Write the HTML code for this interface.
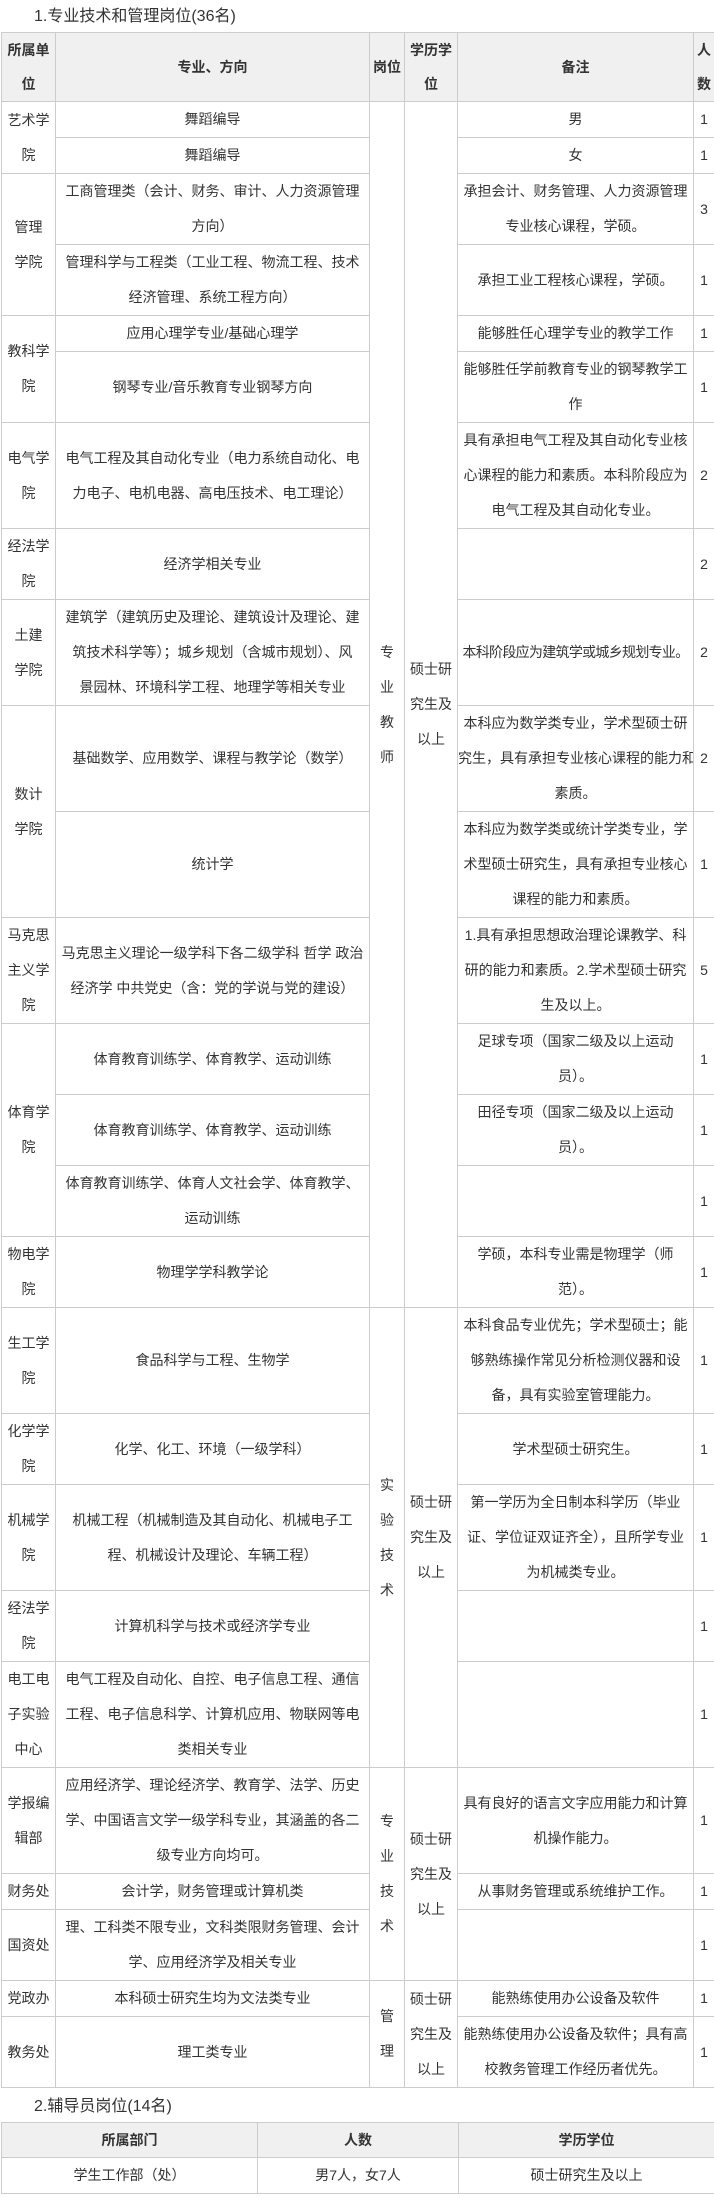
<!DOCTYPE html>
<html><head><meta charset="utf-8">
<style>
body{margin:0;background:#fff;width:714px;height:2198px;overflow:hidden;font-family:"Liberation Sans","Noto Sans CJK SC",sans-serif;color:#333;}
.t{position:absolute;left:34px;font-size:16px;line-height:20px;}
table{position:absolute;left:1px;border-collapse:collapse;table-layout:fixed;font-size:14px;}
td,th{border:1px solid #ccc;padding:0;text-align:center;vertical-align:middle;line-height:35px;white-space:nowrap;overflow:hidden;}
th{background:#f0f0f0;font-weight:bold;line-height:34px;}
.s{letter-spacing:-0.7px}
</style></head><body>
<div class="t" style="top:7px">1.专业技术和管理岗位(36名)</div>
<table style="top:32px;width:713px">
<colgroup><col style="width:54px"><col style="width:314px"><col style="width:35px"><col style="width:53px"><col style="width:236px"><col style="width:21px"></colgroup>
<tr><th>所属单<br>位</th><th>专业、方向</th><th>岗位</th><th>学历学<br>位</th><th>备注</th><th>人<br>数</th></tr>
<tr><td rowspan="2">艺术学<br>院</td><td>舞蹈编导</td><td rowspan="16">专<br>业<br>教<br>师</td><td rowspan="16">硕士研<br>究生及<br>以上</td><td>男</td><td>1</td></tr>
<tr><td>舞蹈编导</td><td>女</td><td>1</td></tr>
<tr><td rowspan="2">管理<br>学院</td><td>工商管理类（会计、财务、审计、人力资源管理<br>方向）</td><td>承担会计、财务管理、人力资源管理<br>专业核心课程，学硕。</td><td>3</td></tr>
<tr><td>管理科学与工程类（工业工程、物流工程、技术<br>经济管理、系统工程方向）</td><td>承担工业工程核心课程，学硕。</td><td>1</td></tr>
<tr><td rowspan="2">教科学<br>院</td><td>应用心理学专业/基础心理学</td><td>能够胜任心理学专业的教学工作</td><td>1</td></tr>
<tr><td>钢琴专业/音乐教育专业钢琴方向</td><td>能够胜任学前教育专业的钢琴教学工<br>作</td><td>1</td></tr>
<tr><td>电气学<br>院</td><td>电气工程及其自动化专业（电力系统自动化、电<br>力电子、电机电器、高电压技术、电工理论）</td><td>具有承担电气工程及其自动化专业核<br>心课程的能力和素质。本科阶段应为<br>电气工程及其自动化专业。</td><td>2</td></tr>
<tr><td>经法学<br>院</td><td>经济学相关专业</td><td></td><td>2</td></tr>
<tr><td>土建<br>学院</td><td>建筑学（建筑历史及理论、建筑设计及理论、建<br>筑技术科学等）；城乡规划（含城市规划）、风<br>景园林、环境科学工程、地理学等相关专业</td><td class="s">本科阶段应为建筑学或城乡规划专业。</td><td>2</td></tr>
<tr><td rowspan="2">数计<br>学院</td><td>基础数学、应用数学、课程与教学论（数学）</td><td>本科应为数学类专业，学术型硕士研<br>究生，具有承担专业核心课程的能力和<br>素质。</td><td>2</td></tr>
<tr><td>统计学</td><td>本科应为数学类或统计学类专业，学<br>术型硕士研究生，具有承担专业核心<br>课程的能力和素质。</td><td>1</td></tr>
<tr><td>马克思<br>主义学<br>院</td><td>马克思主义理论一级学科下各二级学科 哲学 政治<br>经济学 中共党史（含：党的学说与党的建设）</td><td>1.具有承担思想政治理论课教学、科<br>研的能力和素质。2.学术型硕士研究<br>生及以上。</td><td>5</td></tr>
<tr><td rowspan="3">体育学<br>院</td><td>体育教育训练学、体育教学、运动训练</td><td>足球专项（国家二级及以上运动<br>员）。</td><td>1</td></tr>
<tr><td>体育教育训练学、体育教学、运动训练</td><td>田径专项（国家二级及以上运动<br>员）。</td><td>1</td></tr>
<tr><td>体育教育训练学、体育人文社会学、体育教学、<br>运动训练</td><td></td><td>1</td></tr>
<tr><td>物电学<br>院</td><td>物理学学科教学论</td><td>学硕，本科专业需是物理学（师<br>范）。</td><td>1</td></tr>
<tr><td>生工学<br>院</td><td>食品科学与工程、生物学</td><td rowspan="5">实<br>验<br>技<br>术</td><td rowspan="5">硕士研<br>究生及<br>以上</td><td>本科食品专业优先；学术型硕士；能<br>够熟练操作常见分析检测仪器和设<br>备，具有实验室管理能力。</td><td>1</td></tr>
<tr><td>化学学<br>院</td><td>化学、化工、环境（一级学科）</td><td>学术型硕士研究生。</td><td>1</td></tr>
<tr><td>机械学<br>院</td><td>机械工程（机械制造及其自动化、机械电子工<br>程、机械设计及理论、车辆工程）</td><td>第一学历为全日制本科学历（毕业<br>证、学位证双证齐全），且所学专业<br>为机械类专业。</td><td>1</td></tr>
<tr><td>经法学<br>院</td><td>计算机科学与技术或经济学专业</td><td></td><td>1</td></tr>
<tr><td>电工电<br>子实验<br>中心</td><td>电气工程及自动化、自控、电子信息工程、通信<br>工程、电子信息科学、计算机应用、物联网等电<br>类相关专业</td><td></td><td>1</td></tr>
<tr><td>学报编<br>辑部</td><td>应用经济学、理论经济学、教育学、法学、历史<br>学、中国语言文学一级学科专业，其涵盖的各二<br>级专业方向均可。</td><td rowspan="3">专<br>业<br>技<br>术</td><td rowspan="3">硕士研<br>究生及<br>以上</td><td>具有良好的语言文字应用能力和计算<br>机操作能力。</td><td>1</td></tr>
<tr><td>财务处</td><td>会计学，财务管理或计算机类</td><td>从事财务管理或系统维护工作。</td><td>1</td></tr>
<tr><td>国资处</td><td>理、工科类不限专业，文科类限财务管理、会计<br>学、应用经济学及相关专业</td><td></td><td>1</td></tr>
<tr><td>党政办</td><td>本科硕士研究生均为文法类专业</td><td rowspan="2">管<br>理</td><td rowspan="2">硕士研<br>究生及<br>以上</td><td>能熟练使用办公设备及软件</td><td>1</td></tr>
<tr><td>教务处</td><td>理工类专业</td><td>能熟练使用办公设备及软件；具有高<br>校教务管理工作经历者优先。</td><td>1</td></tr>
</table>
<div class="t" style="top:2097px">2.辅导员岗位(14名)</div>
<table style="top:2122px;width:713px">
<colgroup><col style="width:256px"><col style="width:201px"><col style="width:256px"></colgroup>
<tr><th>所属部门</th><th>人数</th><th>学历学位</th></tr>
<tr><td>学生工作部（处）</td><td>男7人，女7人</td><td>硕士研究生及以上</td></tr>
</table>
</body></html>
